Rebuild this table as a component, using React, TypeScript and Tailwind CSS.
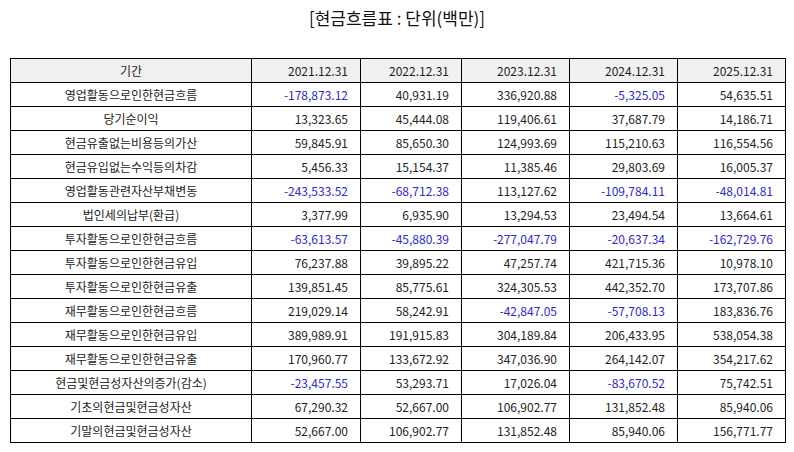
import React from "react";

const years = ["2021.12.31", "2022.12.31", "2023.12.31", "2024.12.31", "2025.12.31"];

const rows: [string, string[]][] = [
  ["영업활동으로인한현금흐름", ["-178,873.12", "40,931.19", "336,920.88", "-5,325.05", "54,635.51"]],
  ["당기순이익", ["13,323.65", "45,444.08", "119,406.61", "37,687.79", "14,186.71"]],
  ["현금유출없는비용등의가산", ["59,845.91", "85,650.30", "124,993.69", "115,210.63", "116,554.56"]],
  ["현금유입없는수익등의차감", ["5,456.33", "15,154.37", "11,385.46", "29,803.69", "16,005.37"]],
  ["영업활동관련자산부채변동", ["-243,533.52", "-68,712.38", "113,127.62", "-109,784.11", "-48,014.81"]],
  ["법인세의납부(환급)", ["3,377.99", "6,935.90", "13,294.53", "23,494.54", "13,664.61"]],
  ["투자활동으로인한현금흐름", ["-63,613.57", "-45,880.39", "-277,047.79", "-20,637.34", "-162,729.76"]],
  ["투자활동으로인한현금유입", ["76,237.88", "39,895.22", "47,257.74", "421,715.36", "10,978.10"]],
  ["투자활동으로인한현금유출", ["139,851.45", "85,775.61", "324,305.53", "442,352.70", "173,707.86"]],
  ["재무활동으로인한현금흐름", ["219,029.14", "58,242.91", "-42,847.05", "-57,708.13", "183,836.76"]],
  ["재무활동으로인한현금유입", ["389,989.91", "191,915.83", "304,189.84", "206,433.95", "538,054.38"]],
  ["재무활동으로인한현금유출", ["170,960.77", "133,672.92", "347,036.90", "264,142.07", "354,217.62"]],
  ["현금및현금성자산의증가(감소)", ["-23,457.55", "53,293.71", "17,026.04", "-83,670.52", "75,742.51"]],
  ["기초의현금및현금성자산", ["67,290.32", "52,667.00", "106,902.77", "131,852.48", "85,940.06"]],
  ["기말의현금및현금성자산", ["52,667.00", "106,902.77", "131,852.48", "85,940.06", "156,771.77"]],
];

export default function App() {
  return (
    <div
      className="w-[794px] h-[452px] bg-white text-[#222]"
      style={{ fontFamily: '"Noto Sans CJK KR", "Noto Sans", sans-serif' }}
    >
      <div className="h-[58px] pt-[6px] text-center text-[17px] leading-[24px] text-[#111]">
        [현금흐름표 : 단위(백만)]
      </div>
      <table className="ml-[10px] w-[775px] table-fixed border-collapse text-[12px] leading-[16px]">
        <colgroup>
          <col className="w-[241px]" />
          <col className="w-[109px]" />
          <col className="w-[101px]" />
          <col className="w-[108px]" />
          <col className="w-[108px]" />
          <col className="w-[108px]" />
        </colgroup>
        <thead>
          <tr className="h-[24px] bg-[#f0f0f0]">
            <td className="border border-black p-0 text-center">기간</td>
            {years.map((y) => (
              <td key={y} className="border border-black p-0 pr-[12px] text-right">
                {y}
              </td>
            ))}
          </tr>
        </thead>
        <tbody>
          {rows.map(([label, vals]) => (
            <tr key={label} className="h-[24px]">
              <td className="border border-black p-0 text-center">{label}</td>
              {vals.map((v, i) => (
                <td
                  key={i}
                  className={
                    "border border-black p-0 pr-[12px] text-right " +
                    (v.startsWith("-") ? "text-[#2a2ad0]" : "")
                  }
                >
                  {v}
                </td>
              ))}
            </tr>
          ))}
        </tbody>
      </table>
    </div>
  );
}
